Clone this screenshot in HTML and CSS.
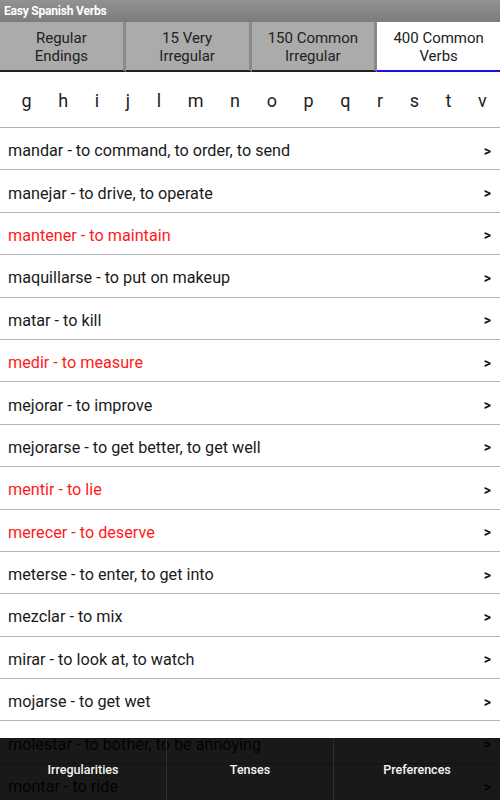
FILE: index.html
```html
<!DOCTYPE html>
<html>
<head>
<meta charset="utf-8">
<link rel="stylesheet" href="styles.css">
</head>
<body>
<div class="app">
  <div class="titlebar">Easy Spanish Verbs</div>
  <div class="tabs">
    <div class="tab">Regular<br>Endings</div>
    <div class="tab">15 Very<br>Irregular</div>
    <div class="tab">150 Common<br>Irregular</div>
    <div class="tab active">400 Common<br>Verbs</div>
  </div>
  <div class="letters">
    <span>g</span><span>h</span><span>i</span><span>j</span><span>l</span><span>m</span><span>n</span><span>o</span><span>p</span><span>q</span><span>r</span><span>s</span><span>t</span><span>v</span>
  </div>
  <div class="list">
    <div class="row"><span>mandar - to command, to order, to send</span><b>&gt;</b></div>
    <div class="row"><span>manejar - to drive, to operate</span><b>&gt;</b></div>
    <div class="row red"><span>mantener - to maintain</span><b>&gt;</b></div>
    <div class="row"><span>maquillarse - to put on makeup</span><b>&gt;</b></div>
    <div class="row"><span>matar - to kill</span><b>&gt;</b></div>
    <div class="row red"><span>medir - to measure</span><b>&gt;</b></div>
    <div class="row"><span>mejorar - to improve</span><b>&gt;</b></div>
    <div class="row"><span>mejorarse - to get better, to get well</span><b>&gt;</b></div>
    <div class="row red"><span>mentir - to lie</span><b>&gt;</b></div>
    <div class="row red"><span>merecer - to deserve</span><b>&gt;</b></div>
    <div class="row"><span>meterse - to enter, to get into</span><b>&gt;</b></div>
    <div class="row"><span>mezclar - to mix</span><b>&gt;</b></div>
    <div class="row"><span>mirar - to look at, to watch</span><b>&gt;</b></div>
    <div class="row"><span>mojarse - to get wet</span><b>&gt;</b></div>
    <div class="row"><span>molestar - to bother, to be annoying</span><b>&gt;</b></div>
    <div class="row"><span>montar - to ride</span><b>&gt;</b></div>
  </div>
  <div class="bottombar">
    <div class="bitem">Irregularities</div>
    <div class="bitem">Tenses</div>
    <div class="bitem">Preferences</div>
  </div>
</div>
</body>
</html>
```

FILE: styles.css
```css
* { box-sizing: border-box; }
html, body { margin: 0; padding: 0; }
body {
  width: 500px;
  height: 800px;
  overflow: hidden;
  background: #fff;
  font-family: Roboto, "Liberation Sans", sans-serif;
}
.app {
  position: relative;
  width: 500px;
  height: 800px;
  overflow: hidden;
}
.titlebar {
  height: 22px;
  background: linear-gradient(#929292, #7c7c7c);
  color: #fff;
  font-weight: bold;
  font-size: 12px;
  line-height: 22px;
  padding-left: 4px;
  letter-spacing: -0.2px;
}
.tabs {
  display: flex;
  height: 50px;
  background: #ababab;
}
.tab {
  flex: 1;
  display: flex;
  align-items: center;
  justify-content: center;
  text-align: center;
  font-size: 15px;
  line-height: 18px;
  color: #222;
  padding-top: 2px;
  border-bottom: 2px solid #222;
  border-right: 3px solid #8a8a8a;
}
.tab.active {
  background: #fff;
  border-bottom-color: #1515e8;
  border-right: none;
}
.letters {
  display: flex;
  height: 56px;
  align-items: center;
  padding-left: 8.3px;
  padding-top: 2px;
  border-bottom: 1px solid #b0b0b0;
  font-size: 18px;
  color: #222;
}
.letters span {
  padding: 0 13.3px;
}
.list {
  display: flex;
  flex-direction: column;
}
.row {
  flex: none;
  height: 42.4px;
  display: flex;
  align-items: center;
  justify-content: space-between;
  padding: 4px 9px 0 8px;
  border-bottom: 1px solid #b4b4b4;
  font-size: 16.2px;
  color: #1a1a1a;
}
.row.red { color: #ff1a1a; }
.row b {
  font-size: 14px;
  color: #111;
}
.bottombar {
  position: absolute;
  left: 0;
  right: 0;
  bottom: 0;
  height: 62px;
  background: rgba(0, 0, 0, 0.9);
  display: flex;
}
.bitem {
  flex: 1;
  display: flex;
  align-items: center;
  justify-content: center;
  color: #f4f4f4;
  font-weight: 500;
  font-size: 12.5px;
  border-right: 1px solid #2e2e2e;
}
.bitem:last-child { border-right: none; }
```
